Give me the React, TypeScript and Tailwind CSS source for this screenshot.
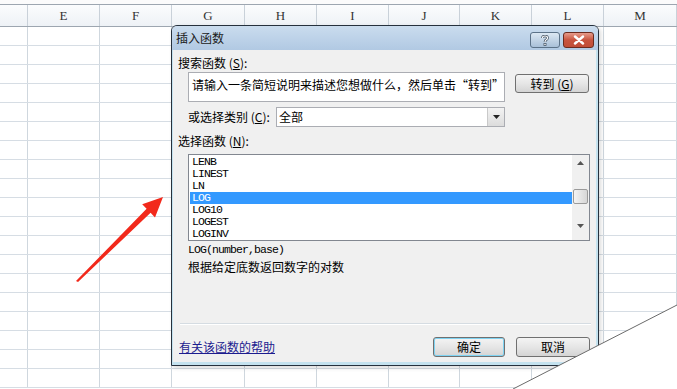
import React from "react"

const cols = [
  { label: "", w: "w-[28px]" },
  { label: "E", w: "w-[72px]" },
  { label: "F", w: "w-[72px]" },
  { label: "G", w: "w-[73px]" },
  { label: "H", w: "w-[72px]" },
  { label: "I", w: "w-[72px]" },
  { label: "J", w: "w-[71px]" },
  { label: "K", w: "w-[72px]" },
  { label: "L", w: "w-[72px]" },
  { label: "M", w: "w-[73px]" },
]

const funcs = ["LENB", "LINEST", "LN", "LOG", "LOG10", "LOGEST", "LOGINV"]

const cjk = "font-['Noto_Sans_CJK_SC',sans-serif]"
const mono = "font-['Liberation_Mono',monospace]"

export default function App() {
  return (
    <div className="relative w-[677px] h-[389px] overflow-hidden bg-white text-black">
      {/* Sheet */}
      <Sheet />

      {/* Dialog */}
      <div className="absolute left-[171px] top-[25px] w-[428px] h-[341px] flex flex-col border border-[#26313d] rounded-t-[6px] overflow-hidden shadow-[2px_2px_4px_rgba(0,0,0,0.15)]">
        <div className="h-[24px] flex items-center justify-between bg-gradient-to-b from-[#cadcee] to-[#b1c9e3] pl-[4px] pr-[4px]">
          <span className={`${cjk} text-[12px] leading-[14px] text-[#1a1a1a]`}>插入函数</span>
          <div className="flex items-center gap-[3px] mt-[4px]">
            <div className="w-[30px] h-[16px] rounded-[3px] border border-[#5c7288] bg-gradient-to-b from-[#dce8f3] to-[#a9c0d8] flex items-center justify-center">
              <svg width="8" height="11" viewBox="0 0 8 11">
                <path
                  d="M1.5 3 Q1.5 1 4 1 Q6.5 1 6.5 3 Q6.5 4.3 5 5 Q4 5.5 4 7"
                  fill="none"
                  stroke="#3c4b5c"
                  strokeWidth="2.6"
                />
                <path
                  d="M1.5 3 Q1.5 1 4 1 Q6.5 1 6.5 3 Q6.5 4.3 5 5 Q4 5.5 4 7"
                  fill="none"
                  stroke="#fff"
                  strokeWidth="1.2"
                />
                <rect x="2.6" y="8" width="2.8" height="2.8" fill="#3c4b5c" />
                <rect x="3.3" y="8.7" width="1.4" height="1.4" fill="#fff" />
              </svg>
            </div>
            <div className="w-[31px] h-[16px] rounded-[3px] border border-[#6b2a1e] bg-gradient-to-b from-[#e69b8b] via-[#c8533e] to-[#c04d37] flex items-center justify-center">
              <svg width="12" height="10" viewBox="0 0 12 10">
                <path d="M2 1.5 L10 8.5 M10 1.5 L2 8.5" stroke="#fff" strokeWidth="2.4" strokeLinecap="round" />
              </svg>
            </div>
          </div>
        </div>

        <div className={`flex-1 flex flex-col bg-[#f0f0f0] border-l border-r-2 border-b-[3px] border-[#c4e2ef] ${cjk} text-[12px]`}>
          <div className="mt-[6px] ml-[5px] h-[14px] leading-[14px]">
            搜索函数 (<span className="underline">S</span>):
          </div>

          <div className="mt-[2px] ml-[15px] flex items-start">
            <div className="w-[317px] h-[30px] border border-[#abadb3] bg-white pl-[3px] pt-[5px] leading-[14px] whitespace-nowrap overflow-hidden">
              请输入一条简短说明来描述您想做什么，然后单击“转到”
            </div>
            <Button className="ml-[10px] mt-[2px] w-[74px] h-[19px]">
              转到 (<span className="underline">G</span>)
            </Button>
          </div>

          <div className="mt-[5px] ml-[15px] flex items-center">
            <div className="w-[88px] leading-[14px]">
              或选择类别 (<span className="underline">C</span>):
            </div>
            <div className="w-[229px] h-[20px] border border-[#abadb3] bg-white flex items-center">
              <span className="flex-1 pl-[2px] leading-[14px]">全部</span>
              <div className="w-[17px] h-[18px] border-l border-[#c9c9c9] bg-gradient-to-b from-[#f3f3f3] to-[#dcdcdc] flex items-center justify-center">
                <svg width="7" height="4" viewBox="0 0 7 4">
                  <path d="M0 0 H7 L3.5 4 Z" fill="#222" />
                </svg>
              </div>
            </div>
          </div>

          <div className="mt-[7px] ml-[5px] h-[14px] leading-[14px]">
            选择函数 (<span className="underline">N</span>):
          </div>

          <div className="mt-[6px] ml-[15px] w-[402px] h-[87px] border border-[#828790] bg-white flex">
            <div className={`flex-1 pt-[1px] pl-[1px] ${mono} text-[11.5px] tracking-[-0.9px]`}>
              {funcs.map((f) => (
                <div
                  key={f}
                  className={`h-[12px] leading-[12px] pl-[2px] ${
                    f === "LOG" ? "bg-[#3399ff] text-white" : ""
                  }`}
                >
                  {f}
                </div>
              ))}
            </div>
            <div className="w-[17px] bg-[#f0f0f0] flex flex-col items-center">
              <svg className="mt-[6px]" width="7" height="4" viewBox="0 0 7 4">
                <path d="M0 4 H7 L3.5 0 Z" fill="#555" />
              </svg>
              <div className="mt-[24px] w-[15px] h-[15px] rounded-[2px] border border-[#9a9a9a] bg-gradient-to-r from-[#f4f4f4] to-[#d6d6d6]" />
              <svg className="mt-[20px]" width="7" height="4" viewBox="0 0 7 4">
                <path d="M0 0 H7 L3.5 4 Z" fill="#555" />
              </svg>
            </div>
          </div>

          <div className={`mt-[3px] ml-[15px] h-[12px] leading-[12px] ${mono} text-[11.5px] tracking-[-0.9px]`}>
            LOG(number,base)
          </div>
          <div className="mt-[4px] ml-[15px] h-[14px] leading-[14px]">根据给定底数返回数字的对数</div>

          <div className="mt-[49px] ml-[7px] mr-[5px] h-[2px] border-t border-[#d5dce2] border-b border-b-white" />

          <div className="mt-[12px] ml-[6px] mr-[6px] flex items-center">
            <span className="text-[#1c1c8f] underline leading-[14px]">有关该函数的帮助</span>
            <div className="ml-auto flex gap-[11px]">
              <Button className="w-[72px] h-[20px] border-[#3d7bad] shadow-[inset_0_0_0_1px_#7fd3f2]">确定</Button>
              <Button className="w-[74px] h-[20px]">取消</Button>
            </div>
          </div>
        </div>
      </div>

      {/* Red arrow and page curl */}
      <svg className="absolute left-0 top-0" width="677" height="389" viewBox="0 0 677 389">
        <polygon
          points="76,281 146.6,208.8 142.2,204.2 163,197 155,217.5 150.6,212.8 78,282"
          fill="#f2291b"
        />
        <polygon points="513,389 677,305 677,389" fill="#fff" />
        <line x1="513" y1="389" x2="677" y2="305" stroke="#6a6a6a" strokeWidth="1" />
      </svg>
    </div>
  )
}

function Sheet() {
  const rows = Array.from({ length: 19 })
  return (
    <div className="flex flex-col">
      <div className="h-[4px] bg-[#fbfbfb]" />
      <div className="flex h-[23px] border-t border-b border-[#9da6b0] bg-gradient-to-b from-[#fbfcfd] to-[#eef2f6]">
        {cols.map((c, i) => (
          <div
            key={i}
            className={`${c.w} shrink-0 border-r border-[#c9d1d9] flex items-center justify-center font-['Liberation_Serif',serif] text-[13px] text-[#333]`}
          >
            {c.label}
          </div>
        ))}
      </div>
      {rows.map((_, r) => (
        <div key={r} className="flex h-[19px] border-b border-[#d6dde4]">
          {cols.map((c, i) => (
            <div key={i} className={`${c.w} shrink-0 border-r border-[#cfd7de]`} />
          ))}
        </div>
      ))}
    </div>
  )
}

function Button({ className = "", children }: { className?: string; children: React.ReactNode }) {
  return (
    <div
      className={`rounded-[3px] border border-[#707070] bg-gradient-to-b from-[#f4f4f4] via-[#e6e6e6] to-[#d4d4d4] flex items-center justify-center leading-[14px] ${className}`}
    >
      {children}
    </div>
  )
}
